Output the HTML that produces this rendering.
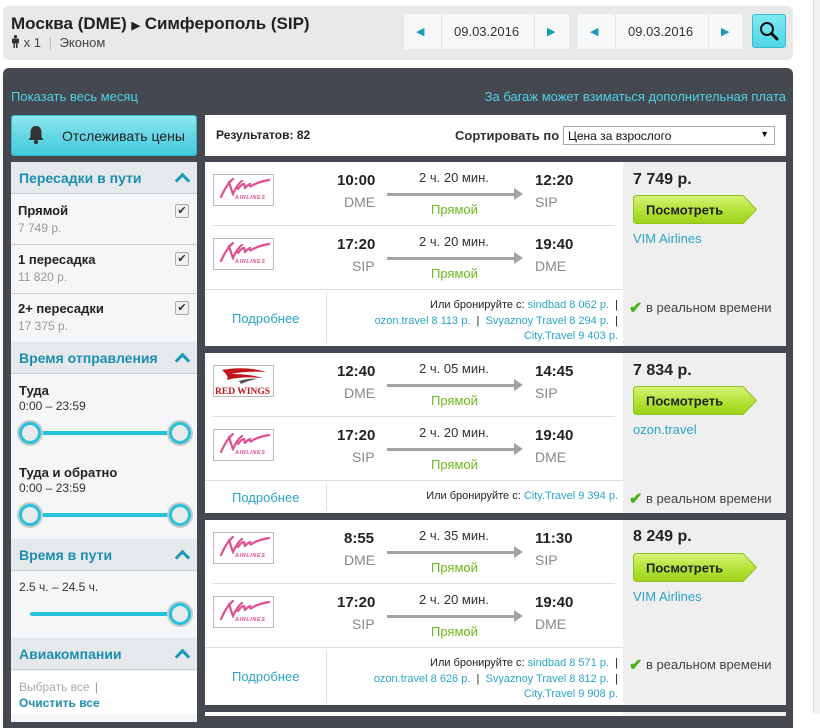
<!DOCTYPE html>
<html><head><meta charset="utf-8">
<style>
*{margin:0;padding:0;box-sizing:border-box}
body{width:820px;height:714px;overflow:hidden;background:#fff;font-family:"Liberation Sans",Arial,sans-serif;position:relative;color:#333}
.a{position:absolute;white-space:nowrap}
.hdr{left:3px;top:6px;width:790px;height:54px;background:#e7e9eb;border-radius:6px}
.dbox{top:14px;height:35px;background:#f7f8f9;}
.dark{left:3px;top:68px;width:790px;height:660px;background:#454851;border-radius:6px 6px 0 0}
.cy{color:#4fd1e6;font-size:13px}
.sb{background:#f5f6f7}
.sh{background:#e6e9ec;color:#1a8fb0;font-size:14px;font-weight:bold;height:32px;padding:8px 0 0 8px;border-bottom:1px solid #c9ccd0}
.car{position:absolute;right:9px;top:13px;width:11px;height:11px;border-left:3px solid #1a9ab8;border-top:3px solid #1a9ab8;transform:rotate(45deg)}
.chk{width:14px;height:14px;border:1px solid #aaa;background:#f0f0f0;border-radius:2px;font-size:11px;line-height:12px;text-align:center;color:#333}
.b{font-weight:bold}
.card{background:#fff}
.pc{background:#efefef}
.t{font-size:15px;font-weight:bold;color:#222}
.ap{font-size:14px;color:#888}
.du{font-size:13px;color:#333}
.dir{font-size:13px;color:#6aba1a}
.arr{height:3px;background:#a0a2a6}
.arrh{width:0;height:0;border-left:9px solid #a0a2a6;border-top:6px solid transparent;border-bottom:6px solid transparent}
.lk{color:#2aa5c8}
.sm{font-size:11px;color:#222;text-align:right}
.pr{font-size:16px;font-weight:bold;color:#222}
.rt{font-size:13px;color:#444}
.ck{color:#4caf1c;font-weight:bold;font-size:16px;vertical-align:-1px}
.knob{width:22px;height:22px;border-radius:50%;background:#e8eaec;border:3px solid #25c2d9;box-shadow:0 0 0 2px #c8cacc}
.bar{height:4px;background:#25c2d9}
</style></head><body>
<div class="a hdr"></div>
<div class="a b" style="left:11px;top:14px;font-size:17px;color:#222">Москва (DME) <span style="font-size:11px">▶</span> Симферополь (SIP)</div>
<div class="a" style="left:11px;top:35px;font-size:13px;color:#444"><svg width="9" height="13" viewBox="0 0 9 13" style="vertical-align:-1px"><circle cx="4.5" cy="1.6" r="1.6" fill="#333"/><rect x="1" y="3.5" width="7" height="5" rx="1" fill="#333"/><rect x="2.5" y="8" width="1.5" height="5" fill="#333"/><rect x="5" y="8" width="1.5" height="5" fill="#333"/></svg> x 1 <span style="color:#bbb;margin:0 4px">|</span> Эконом</div>

<div class="a dbox" style="left:404px;width:165px"></div>
<div class="a" style="left:441px;top:14px;width:1px;height:35px;background:#e4e6e8"></div>
<div class="a" style="left:534px;top:14px;width:1px;height:35px;background:#e4e6e8"></div>
<div class="a" style="left:416px;top:25px;font-size:11px;color:#1a9ab8">◀</div>
<div class="a" style="left:454px;top:24px;font-size:13px;color:#333">09.03.2016</div>
<div class="a" style="left:547px;top:25px;font-size:11px;color:#1a9ab8">▶</div>
<div class="a dbox" style="left:578px;width:164px"></div>
<div class="a" style="left:615px;top:14px;width:1px;height:35px;background:#e4e6e8"></div>
<div class="a" style="left:708px;top:14px;width:1px;height:35px;background:#e4e6e8"></div>
<div class="a" style="left:590px;top:25px;font-size:11px;color:#1a9ab8">◀</div>
<div class="a" style="left:628px;top:24px;font-size:13px;color:#333">09.03.2016</div>
<div class="a" style="left:721px;top:25px;font-size:11px;color:#1a9ab8">▶</div>
<div class="a" style="left:752px;top:14px;width:34px;height:34px;background:linear-gradient(#7ee8f2,#4fd6e8);border:1px solid #3bb9cc;border-radius:3px"></div>
<svg class="a" style="left:758px;top:20px" width="22" height="22" viewBox="0 0 22 22"><circle cx="9" cy="9" r="6" fill="none" stroke="#111" stroke-width="2"/><path d="M13.5 13.5 L19 19" stroke="#111" stroke-width="3" stroke-linecap="round"/></svg>

<div class="a" style="left:813px;top:0;width:7px;height:714px;background:#f2f2f2;border-left:1px solid #ddd"></div>

<div class="a dark"></div>
<div class="a cy" style="left:11px;top:89px">Показать весь месяц</div>
<div class="a cy" style="right:34px;top:89px">За багаж может взиматься дополнительная плата</div>

<div class="a" style="left:11px;top:115px;width:186px;height:41px;background:linear-gradient(#8fe4ef,#3fcadc);border:1px solid #35b6c8;border-radius:3px"></div>
<svg class="a" style="left:27px;top:125px" width="18" height="20" viewBox="0 0 18 20"><path d="M9 1 C5 1 3.5 4 3.5 8 L3.5 12 L1.5 15 L16.5 15 L14.5 12 L14.5 8 C14.5 4 13 1 9 1Z" fill="#333"/><circle cx="9" cy="17" r="2.2" fill="#333"/></svg>
<div class="a" style="left:62px;top:128px;font-size:14px;color:#222">Отслеживать цены</div>

<div class="a sb" style="left:11px;top:162px;width:186px;height:560px"></div>
<div class="a sh" style="left:11px;top:162px;width:186px">Пересадки в пути<div class="car"></div></div>
<div class="a b" style="left:18px;top:203px;font-size:13px;color:#222">Прямой</div>
<div class="a" style="left:18px;top:221px;font-size:12px;color:#999">7 749 р.</div>
<div class="a chk" style="left:175px;top:204px">✔</div>
<div class="a" style="left:11px;top:244px;width:186px;height:1px;background:#ccc"></div>
<div class="a b" style="left:18px;top:252px;font-size:13px;color:#222">1 пересадка</div>
<div class="a" style="left:18px;top:270px;font-size:12px;color:#999">11 820 р.</div>
<div class="a chk" style="left:175px;top:252px">✔</div>
<div class="a" style="left:11px;top:293px;width:186px;height:1px;background:#ccc"></div>
<div class="a b" style="left:18px;top:301px;font-size:13px;color:#222">2+ пересадки</div>
<div class="a" style="left:18px;top:319px;font-size:12px;color:#999">17 375 р.</div>
<div class="a chk" style="left:175px;top:301px">✔</div>
<div class="a sh" style="left:11px;top:342px;width:186px">Время отправления<div class="car"></div></div>
<div class="a b" style="left:19px;top:383px;font-size:13px;color:#222">Туда</div>
<div class="a" style="left:19px;top:399px;font-size:12px;color:#333">0:00 – 23:59</div>
<div class="a bar" style="left:30px;top:431px;width:150px"></div>
<div class="a knob" style="left:19px;top:422px"></div>
<div class="a knob" style="left:169px;top:422px"></div>
<div class="a b" style="left:19px;top:465px;font-size:13px;color:#222">Туда и обратно</div>
<div class="a" style="left:19px;top:481px;font-size:12px;color:#333">0:00 – 23:59</div>
<div class="a bar" style="left:30px;top:513px;width:150px"></div>
<div class="a knob" style="left:19px;top:504px"></div>
<div class="a knob" style="left:169px;top:504px"></div>
<div class="a sh" style="left:11px;top:539px;width:186px">Время в пути<div class="car"></div></div>
<div class="a" style="left:19px;top:580px;font-size:12px;color:#333">2.5 ч. – 24.5 ч.</div>
<div class="a bar" style="left:30px;top:612px;width:150px;border-radius:2px"></div>
<div class="a knob" style="left:169px;top:603px"></div>
<div class="a sh" style="left:11px;top:638px;width:186px">Авиакомпании<div class="car"></div></div>
<div class="a" style="left:11px;top:671px;width:186px;height:43px;background:#fff"></div>
<div class="a" style="left:19px;top:680px;font-size:12px;color:#aaa">Выбрать все <span style="color:#999;margin-left:2px">|</span></div>
<div class="a b" style="left:19px;top:696px;font-size:12px;color:#1a8fb0">Очистить все</div>

<div class="a" style="left:205px;top:115px;width:581px;height:41px;background:#fff"></div>
<div class="a b" style="left:216px;top:128px;font-size:12px;color:#222">Результатов: 82</div>
<div class="a b" style="left:455px;top:128px;font-size:13px;color:#333">Сортировать по</div>
<div class="a" style="left:563px;top:126px;width:212px;height:19px;border:1px solid #aaa;background:#fff;font-size:12px;padding:2px 0 0 4px;color:#111">Цена за взрослого<span style="position:absolute;right:5px;top:2px;font-size:9px">▼</span></div>

<svg width="0" height="0" style="position:absolute">
<defs>
<g id="vim"><rect x="0.5" y="0.5" width="60" height="31" fill="#fff" stroke="#bbb"/>
<path d="M8 23 C12 14 16 8 20 5 M16 8 C18 14 19 18 20 20 C23 13 26 9 29 7 M25 15 C27 12 29 10 31 10 C32 11 31 13 32 14 C34 12 36 10 37 10 C37 13 38 13 40 11 C44 9 50 7 56 6" fill="none" stroke="#e0508e" stroke-width="2.2" stroke-linecap="round"/>
<text x="22" y="25" font-family="Liberation Sans" font-size="5.5" font-style="italic" fill="#e0508e" font-weight="bold" letter-spacing="0.6">AIRLINES</text></g>
<g id="rw"><rect x="0.5" y="0.5" width="60" height="31" fill="#fff" stroke="#bbb"/>
<path d="M9 5 C25 2 40 3 53 7 C40 6 28 7 18 9 C30 9 40 10 50 13 C38 12 24 12 14 15 C16 11 12 8 9 5Z" fill="#c2141b"/>
<path d="M26 16 C32 14 40 13 44 14 C38 15 32 17 28 19Z" fill="#555"/>
<text x="2" y="29" font-family="Liberation Serif" font-size="9.5" fill="#c2141b" font-weight="bold">RED WINGS</text></g>
<g id="btn"><path d="M4 0.5 L110 0.5 L123.5 14.5 L110 28.5 L4 28.5 Q0.5 28.5 0.5 25 L0.5 4 Q0.5 0.5 4 0.5Z" fill="url(#gg)" stroke="#8fc21a"/>
<text x="13" y="19.5" font-family="Liberation Sans" font-size="13" font-weight="bold" fill="#222">Посмотреть</text></g>
<linearGradient id="gg" x1="0" y1="0" x2="0" y2="1"><stop offset="0" stop-color="#d6f479"/><stop offset="0.5" stop-color="#b5e43a"/><stop offset="1" stop-color="#9dd21a"/></linearGradient>
</defs></svg>

<!-- CARD 1 -->
<div class="a card" style="left:205px;top:162px;width:418px;height:184px"></div>
<div class="a pc" style="left:623px;top:162px;width:163px;height:184px"></div>
<svg class="a" style="left:213px;top:174px" width="62" height="33"><use href="#vim"/></svg>
<div class="a t" style="left:337px;top:172px">10:00</div><div class="a ap" style="left:344px;top:194px">DME</div>
<div class="a du" style="left:419px;top:170px">2 ч. 20 мин.</div>
<div class="a arr" style="left:387px;top:193px;width:128px"></div><div class="a arrh" style="left:514px;top:188px"></div>
<div class="a dir" style="left:431px;top:202px">Прямой</div>
<div class="a t" style="left:535px;top:172px">12:20</div><div class="a ap" style="left:535px;top:194px">SIP</div>
<div class="a" style="left:213px;top:225px;width:402px;height:1px;background:#ddd"></div>
<svg class="a" style="left:213px;top:238px" width="62" height="33"><use href="#vim"/></svg>
<div class="a t" style="left:337px;top:236px">17:20</div><div class="a ap" style="left:352px;top:258px">SIP</div>
<div class="a du" style="left:419px;top:234px">2 ч. 20 мин.</div>
<div class="a arr" style="left:387px;top:257px;width:128px"></div><div class="a arrh" style="left:514px;top:252px"></div>
<div class="a dir" style="left:431px;top:266px">Прямой</div>
<div class="a t" style="left:535px;top:236px">19:40</div><div class="a ap" style="left:535px;top:258px">DME</div>
<div class="a" style="left:205px;top:289px;width:418px;height:1px;background:#ddd"></div>
<div class="a" style="left:326px;top:293px;width:1px;height:50px;background:#ddd"></div>
<div class="a lk" style="left:232px;top:311px;font-size:13px">Подробнее</div>
<div class="a sm" style="right:202px;top:298px;line-height:15.5px">Или бронируйте с: <span class="lk">sindbad 8 062 р.</span> &nbsp;|<br><span class="lk">ozon.travel 8 113 р.</span> &nbsp;| &nbsp;<span class="lk">Svyaznoy Travel 8 294 р.</span> &nbsp;|<br><span class="lk">City.Travel 9 403 р.</span></div>
<div class="a pr" style="left:633px;top:171px">7 749 р.</div>
<svg class="a" style="left:633px;top:195px" width="125" height="30"><use href="#btn"/></svg>
<div class="a lk" style="left:633px;top:231px;font-size:13px">VIM Airlines</div>
<div class="a rt" style="left:629px;top:298px"><span class="ck">✔</span> в реальном времени</div>

<!-- CARD 2 -->
<div class="a card" style="left:205px;top:353px;width:418px;height:160px"></div>
<div class="a pc" style="left:623px;top:353px;width:163px;height:160px"></div>
<svg class="a" style="left:213px;top:365px" width="62" height="33"><use href="#rw"/></svg>
<div class="a t" style="left:337px;top:363px">12:40</div><div class="a ap" style="left:344px;top:385px">DME</div>
<div class="a du" style="left:419px;top:361px">2 ч. 05 мин.</div>
<div class="a arr" style="left:387px;top:384px;width:128px"></div><div class="a arrh" style="left:514px;top:379px"></div>
<div class="a dir" style="left:431px;top:393px">Прямой</div>
<div class="a t" style="left:535px;top:363px">14:45</div><div class="a ap" style="left:535px;top:385px">SIP</div>
<div class="a" style="left:213px;top:416px;width:402px;height:1px;background:#ddd"></div>
<svg class="a" style="left:213px;top:429px" width="62" height="33"><use href="#vim"/></svg>
<div class="a t" style="left:337px;top:427px">17:20</div><div class="a ap" style="left:352px;top:449px">SIP</div>
<div class="a du" style="left:419px;top:425px">2 ч. 20 мин.</div>
<div class="a arr" style="left:387px;top:448px;width:128px"></div><div class="a arrh" style="left:514px;top:443px"></div>
<div class="a dir" style="left:431px;top:457px">Прямой</div>
<div class="a t" style="left:535px;top:427px">19:40</div><div class="a ap" style="left:535px;top:449px">DME</div>
<div class="a" style="left:205px;top:480px;width:418px;height:1px;background:#ddd"></div>
<div class="a" style="left:326px;top:484px;width:1px;height:26px;background:#ddd"></div>
<div class="a lk" style="left:232px;top:490px;font-size:13px">Подробнее</div>
<div class="a sm" style="right:202px;top:490px">Или бронируйте с: <span class="lk">City.Travel 9 394 р.</span></div>
<div class="a pr" style="left:633px;top:362px">7 834 р.</div>
<svg class="a" style="left:633px;top:386px" width="125" height="30"><use href="#btn"/></svg>
<div class="a lk" style="left:633px;top:422px;font-size:13px">ozon.travel</div>
<div class="a rt" style="left:629px;top:489px"><span class="ck">✔</span> в реальном времени</div>

<!-- CARD 3 -->
<div class="a card" style="left:205px;top:520px;width:418px;height:185px"></div>
<div class="a pc" style="left:623px;top:520px;width:163px;height:185px"></div>
<svg class="a" style="left:213px;top:532px" width="62" height="33"><use href="#vim"/></svg>
<div class="a t" style="left:344px;top:530px">8:55</div><div class="a ap" style="left:344px;top:552px">DME</div>
<div class="a du" style="left:419px;top:528px">2 ч. 35 мин.</div>
<div class="a arr" style="left:387px;top:551px;width:128px"></div><div class="a arrh" style="left:514px;top:546px"></div>
<div class="a dir" style="left:431px;top:560px">Прямой</div>
<div class="a t" style="left:535px;top:530px">11:30</div><div class="a ap" style="left:535px;top:552px">SIP</div>
<div class="a" style="left:213px;top:583px;width:402px;height:1px;background:#ddd"></div>
<svg class="a" style="left:213px;top:596px" width="62" height="33"><use href="#vim"/></svg>
<div class="a t" style="left:337px;top:594px">17:20</div><div class="a ap" style="left:352px;top:616px">SIP</div>
<div class="a du" style="left:419px;top:592px">2 ч. 20 мин.</div>
<div class="a arr" style="left:387px;top:615px;width:128px"></div><div class="a arrh" style="left:514px;top:610px"></div>
<div class="a dir" style="left:431px;top:624px">Прямой</div>
<div class="a t" style="left:535px;top:594px">19:40</div><div class="a ap" style="left:535px;top:616px">DME</div>
<div class="a" style="left:205px;top:647px;width:418px;height:1px;background:#ddd"></div>
<div class="a" style="left:326px;top:651px;width:1px;height:52px;background:#ddd"></div>
<div class="a lk" style="left:232px;top:669px;font-size:13px">Подробнее</div>
<div class="a sm" style="right:202px;top:656px;line-height:15.5px">Или бронируйте с: <span class="lk">sindbad 8 571 р.</span> &nbsp;|<br><span class="lk">ozon.travel 8 626 р.</span> &nbsp;| &nbsp;<span class="lk">Svyaznoy Travel 8 812 р.</span> &nbsp;|<br><span class="lk">City.Travel 9 908 р.</span></div>
<div class="a pr" style="left:633px;top:528px">8 249 р.</div>
<svg class="a" style="left:633px;top:553px" width="125" height="30"><use href="#btn"/></svg>
<div class="a lk" style="left:633px;top:589px;font-size:13px">VIM Airlines</div>
<div class="a rt" style="left:629px;top:655px"><span class="ck">✔</span> в реальном времени</div>

<div class="a card" style="left:205px;top:712px;width:418px;height:4px"></div>
<div class="a pc" style="left:623px;top:712px;width:163px;height:4px"></div>
</body></html>
